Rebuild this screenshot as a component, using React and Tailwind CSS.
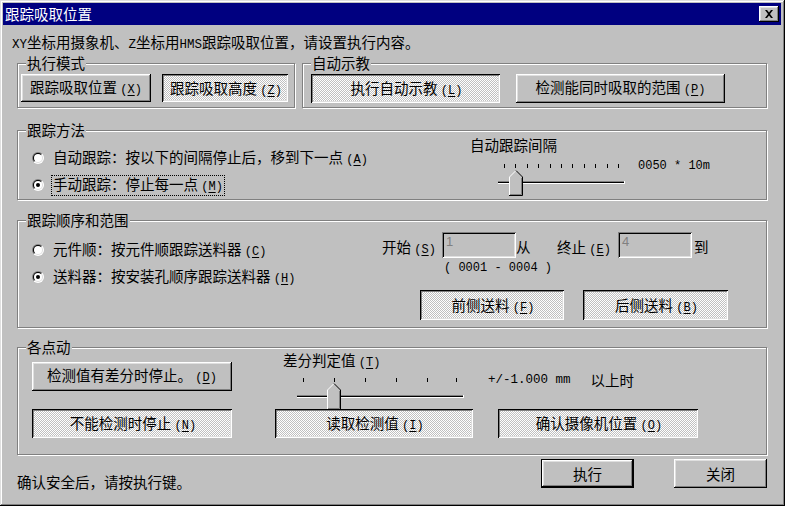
import React from "react";

const CJK = "font-['Noto_Sans_CJK_SC','Noto_Sans_CJK_JP',sans-serif]";
const MONO = "font-['Liberation_Mono',monospace]";
const RAISED =
  "shadow-[inset_-1px_-1px_0_#000,inset_1px_1px_0_#fff,inset_-2px_-2px_0_#808080,inset_2px_2px_0_#dfdfdf]";
const PUSHED =
  "shadow-[inset_1px_1px_0_#000,inset_-1px_-1px_0_#fff,inset_2px_2px_0_#808080,inset_-2px_-2px_0_#dfdfdf] bg-[image:repeating-conic-gradient(#fff_0%_25%,#c0c0c0_0%_50%)] bg-[length:2px_2px] pt-[2px] pl-[2px]";
const DEFBTN =
  "shadow-[inset_0_0_0_1px_#000,inset_-2px_-2px_0_#000,inset_2px_2px_0_#fff,inset_-3px_-3px_0_#808080,inset_3px_3px_0_#dfdfdf]";

function Mn({ k }) {
  return (
    <>
      {" "}
      <span className={`${MONO} text-[12px]`}>
        (<span className="underline underline-offset-[2px]">{k}</span>)
      </span>
    </>
  );
}

function Btn({ kind = "raised", className = "", children }) {
  const style = kind === "pushed" ? PUSHED : kind === "default" ? DEFBTN : RAISED;
  return (
    <div className={`flex shrink-0 items-center justify-center leading-[16px] ${style} ${className}`}>
      <span className="whitespace-nowrap">{children}</span>
    </div>
  );
}

function Group({ label, className = "", children }) {
  return (
    <div
      className={`relative shrink-0 border border-[#808080] shadow-[inset_1px_1px_0_#fff,1px_1px_0_#fff] ${className}`}
    >
      <span className="absolute left-[8px] top-[-9px] bg-[#c0c0c0] px-[1px] leading-[16px] whitespace-nowrap">
        {label}
      </span>
      {children}
    </div>
  );
}

function RadioIcon({ checked }) {
  return (
    <svg width="12" height="12" viewBox="0 0 12 12" className="block shrink-0">
      <defs>
        <clipPath id="r95tl">
          <polygon points="0,0 12,0 0,12" />
        </clipPath>
        <clipPath id="r95br">
          <polygon points="12,0 12,12 0,12" />
        </clipPath>
      </defs>
      <circle cx="6" cy="6" r="6" fill="#808080" clipPath="url(#r95tl)" />
      <circle cx="6" cy="6" r="6" fill="#fff" clipPath="url(#r95br)" />
      <circle cx="6" cy="6" r="5" fill="#000" clipPath="url(#r95tl)" />
      <circle cx="6" cy="6" r="5" fill="#dfdfdf" clipPath="url(#r95br)" />
      <circle cx="6" cy="6" r="4" fill="#fff" />
      {checked && <circle cx="6" cy="6" r="2" fill="#000" />}
    </svg>
  );
}

function Radio({ checked, focus, children }) {
  return (
    <div className="flex h-[20px] items-center">
      <RadioIcon checked={checked} />
      <span
        className={`ml-[7px] whitespace-nowrap border px-[1px] leading-[16px] ${
          focus ? "border-dotted border-black" : "border-transparent"
        }`}
      >
        {children}
      </span>
    </div>
  );
}

function Thumb({ x, y, w, h }) {
  const cx = x + w / 2;
  const s = w / 2;
  return (
    <g>
      <polygon
        points={`${x},${y + h} ${x},${y + s} ${cx},${y} ${x + w},${y + s} ${x + w},${y + h}`}
        fill="#c0c0c0"
      />
      <polyline
        points={`${x + 0.5},${y + h - 1} ${x + 0.5},${y + s} ${cx},${y + 0.5}`}
        stroke="#fff"
        fill="none"
      />
      <polyline
        points={`${cx},${y + 0.5} ${x + w - 0.5},${y + s} ${x + w - 0.5},${y + h - 0.5} ${x},${y + h - 0.5}`}
        stroke="#000"
        fill="none"
      />
      <polyline
        points={`${x + w - 1.5},${y + s + 1} ${x + w - 1.5},${y + h - 1.5} ${x + 1},${y + h - 1.5}`}
        stroke="#808080"
        fill="none"
      />
    </g>
  );
}

function Track({ w, y }) {
  return (
    <g>
      <rect x="0" y={y} width={w - 1} height="1" fill="#808080" />
      <rect x="0" y={y + 1} width={w - 1} height="1" fill="#000" />
      <rect x="0" y={y + 2} width={w} height="1" fill="#fff" />
      <rect x={w - 1} y={y} width="1" height="3" fill="#fff" />
    </g>
  );
}

function Slider1() {
  const ticks = Array.from({ length: 11 }, (_, i) => Math.round(6 + i * 11.4));
  return (
    <svg width="127" height="37" className="block shrink-0">
      {ticks.map((x) => (
        <rect key={x} x={x} y="4" width="1" height="4" fill="#000" />
      ))}
      <Track w={127} y={21} />
      <Thumb x={11} y={10} w={14} h={26} />
    </svg>
  );
}

function Slider2() {
  const ticks = [6, 37, 68, 99, 130, 159];
  return (
    <svg width="167" height="35" className="mt-[5px] ml-[14px] block shrink-0">
      {ticks.map((x) => (
        <rect key={x} x={x} y="2" width="1" height="4" fill="#000" />
      ))}
      <Track w={167} y={19} />
      <Thumb x={30} y={7} w={14} h={27} />
    </svg>
  );
}

function Edit({ value }) {
  return (
    <div className="h-[26px] w-[74px] shrink-0 pl-[4px] pt-[3px] font-['Liberation_Sans',sans-serif] text-[13px] leading-[13px] text-[#808080] shadow-[inset_1px_1px_0_#808080,inset_-1px_-1px_0_#fff,inset_2px_2px_0_#000,inset_-2px_-2px_0_#dfdfdf]">
      {value}
    </div>
  );
}

export default function App() {
  return (
    <div
      className={`h-[506px] w-[785px] overflow-hidden bg-[#c0c0c0] pt-[3px] pl-[3px] pr-[4px] ${CJK} text-[14.5px] text-black shadow-[inset_-1px_-1px_0_#000,inset_1px_1px_0_#dfdfdf,inset_-2px_-2px_0_#808080,inset_2px_2px_0_#fff]`}
    >
      {/* Title bar */}
      <div className="flex h-[22px] items-center justify-between bg-[#000080] pl-[2px] pr-[2px]">
        <span className="leading-[16px] text-white">跟踪吸取位置</span>
        <div className={`flex h-[16px] w-[20px] items-center justify-center bg-[#c0c0c0] ${RAISED}`}>
          <svg width="8" height="8" viewBox="0 0 8 8" className="block">
            <path d="M0 0h2l2 2.5L6 0h2L5 4l3 4H6L4 5.5 2 8H0l3-4z" fill="#000" />
          </svg>
        </div>
      </div>

      {/* Client */}
      <div className="flex flex-col pl-[14px]">
        <div className="mt-[7px] -ml-[5px] h-[20px] whitespace-nowrap leading-[20px]">
          <span className={`${MONO} text-[12.5px]`}>XY</span>坐标用摄象机、
          <span className={`${MONO} text-[12.5px]`}>Z</span>坐标用
          <span className={`${MONO} text-[12.5px]`}>HMS</span>跟踪吸取位置，请设置执行内容。
        </div>

        {/* Row of mode groups */}
        <div className="mt-[11px] flex gap-[7px]">
          <Group label="执行模式" className="h-[45px] w-[278px]">
            <div className="flex pt-[10px] pl-[3px]">
              <Btn className="h-[28px] w-[130px]">
                跟踪吸取位置<Mn k="X" />
              </Btn>
              <Btn kind="pushed" className="ml-[11px] h-[28px] w-[126px]">
                跟踪吸取高度<Mn k="Z" />
              </Btn>
            </div>
          </Group>
          <Group label="自动示教" className="h-[45px] w-[465px]">
            <div className="flex pt-[10px] pl-[8px]">
              <Btn kind="pushed" className="h-[29px] w-[189px]">
                执行自动示教<Mn k="L" />
              </Btn>
              <Btn className="ml-[16px] h-[29px] w-[209px]">
                检测能同时吸取的范围<Mn k="P" />
              </Btn>
            </div>
          </Group>
        </div>

        {/* 跟踪方法 */}
        <Group label="跟踪方法" className="mt-[22px] h-[70px] w-[750px]">
          <div className="flex">
            <div className="flex w-[452px] shrink-0 flex-col gap-[7px] pt-[17px] pl-[14px]">
              <Radio>
                自动跟踪：按以下的间隔停止后，移到下一点<Mn k="A" />
              </Radio>
              <Radio checked focus>
                手动跟踪：停止每一点<Mn k="M" />
              </Radio>
            </div>
            <div className="flex flex-col pt-[6px]">
              <div className="leading-[16px]">自动跟踪间隔</div>
              <div className="mt-[7px] ml-[28px] flex items-start">
                <Slider1 />
                <span className={`${MONO} mt-[-2px] ml-[13px] whitespace-pre text-[12px] leading-[16px]`}>
                  0050 * 10m
                </span>
              </div>
            </div>
          </div>
        </Group>

        {/* 跟踪顺序和范围 */}
        <Group label="跟踪顺序和范围" className="mt-[20px] h-[108px] w-[750px]">
          <div className="flex">
            <div className="flex w-[364px] shrink-0 flex-col gap-[7px] pt-[19px] pl-[14px]">
              <Radio>
                元件顺：按元件顺跟踪送料器<Mn k="C" />
              </Radio>
              <Radio checked>
                送料器：按安装孔顺序跟踪送料器<Mn k="H" />
              </Radio>
            </div>
            <div className="flex flex-col pt-[11px]">
              <div className="flex h-[26px] items-start">
                <span className="mt-[7px] w-[60px] shrink-0 whitespace-nowrap leading-[16px]">
                  开始<Mn k="S" />
                </span>
                <Edit value="1" />
                <span className="mt-[7px] w-[41px] shrink-0 leading-[16px]">从</span>
                <span className="mt-[7px] w-[61px] shrink-0 whitespace-nowrap leading-[16px]">
                  终止<Mn k="E" />
                </span>
                <Edit value="4" />
                <span className="mt-[7px] ml-[2px] leading-[16px]">到</span>
              </div>
              <div className={`${MONO} mt-[2px] ml-[62px] whitespace-pre text-[12px] leading-[16px]`}>
                ( 0001 - 0004 )
              </div>
              <div className="mt-[14px] ml-[38px] flex">
                <Btn kind="pushed" className="h-[30px] w-[144px]">
                  前侧送料<Mn k="F" />
                </Btn>
                <Btn kind="pushed" className="ml-[19px] h-[30px] w-[145px]">
                  后侧送料<Mn k="B" />
                </Btn>
              </div>
            </div>
          </div>
        </Group>

        {/* 各点动 */}
        <Group label="各点动" className="mt-[19px] h-[108px] w-[750px]">
          <div className="flex flex-col pt-[4px] pl-[14px]">
            <div className="flex h-[56px] items-start">
              <Btn className="mt-[10px] h-[29px] w-[200px]">
                检测值有差分时停止。<Mn k="D" />
              </Btn>
              <div className="ml-[51px] flex w-[181px] shrink-0 flex-col">
                <div className="whitespace-nowrap leading-[16px]">
                  差分判定值<Mn k="T" />
                </div>
                <Slider2 />
              </div>
              <div className="mt-[20px] ml-[24px] flex leading-[16px]">
                <span className={`${MONO} whitespace-pre text-[12.5px]`}>+/-1.000 mm</span>
                <span className="ml-[20px]">以上时</span>
              </div>
            </div>
            <div className="mt-[1px] flex">
              <Btn kind="pushed" className="h-[29px] w-[200px]">
                不能检测时停止<Mn k="N" />
              </Btn>
              <Btn kind="pushed" className="ml-[43px] h-[29px] w-[198px]">
                读取检测值<Mn k="I" />
              </Btn>
              <Btn kind="pushed" className="ml-[25px] h-[29px] w-[200px]">
                确认摄像机位置<Mn k="O" />
              </Btn>
            </div>
          </div>
        </Group>

        {/* Bottom row */}
        <div className="mt-[4px] flex items-start">
          <span className="mt-[15px] w-[524px] shrink-0 whitespace-nowrap leading-[16px]">
            确认安全后，请按执行键。
          </span>
          <Btn kind="default" className="h-[29px] w-[93px]">
            执行
          </Btn>
          <Btn className="ml-[40px] h-[29px] w-[93px]">关闭</Btn>
        </div>
      </div>
    </div>
  );
}
